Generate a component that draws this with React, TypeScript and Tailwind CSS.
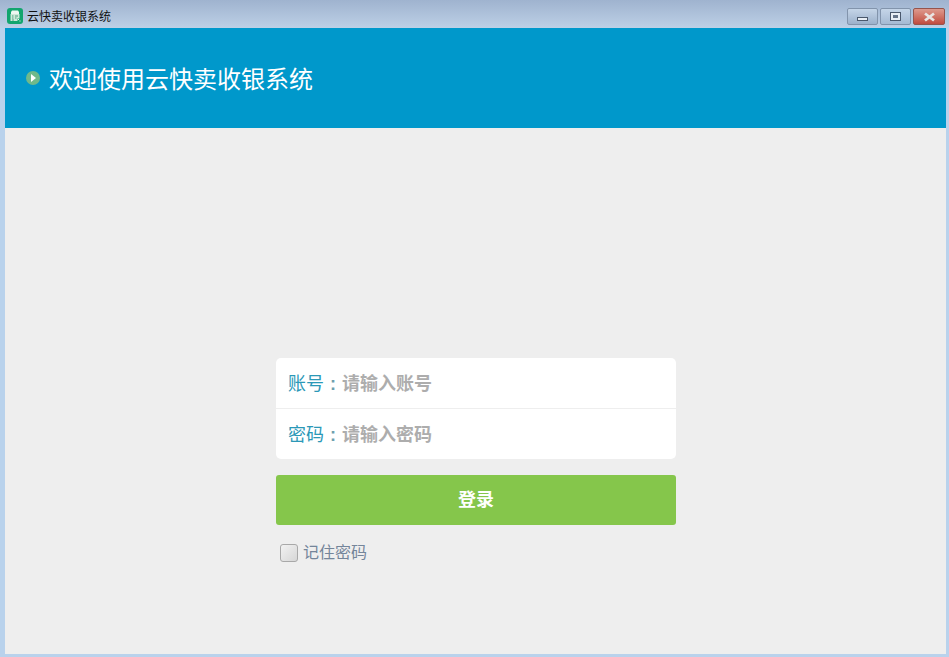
const cjk = "font-['Liberation_Sans','Noto_Sans_CJK_SC',sans-serif]";

function AppIcon() {
  return (
    <svg width="16" height="16" viewBox="0 0 16 16" className="shrink-0">
      <rect x="0" y="0" width="16" height="16" rx="3" fill="#12a56e" />
      <path d="M4 4 L5 2.5 H11 L12 4 V6 H4 Z" fill="#eef7f1" />
      <rect x="3.5" y="6" width="9" height="7" fill="#cfe8da" />
      <path d="M5 8 H6.5 M5 10 H6.5 M8 8 H11 M8 10 H9.5 M5 12 H7" stroke="#4aa37f" strokeWidth="1" />
      <rect x="10.5" y="10.5" width="3.5" height="3.5" fill="#12a56e" />
      <rect x="11" y="11" width="1" height="1" fill="#eef7f1" />
      <rect x="12.5" y="12.5" width="1" height="1" fill="#eef7f1" />
    </svg>
  );
}

function WindowButtons() {
  return (
    <div className="flex items-start gap-[2px] pt-[8px] pr-[4px]">
      <div className="flex h-[17px] w-[31px] items-end justify-center rounded-[2px] border border-[#8294ac] bg-gradient-to-b from-[#c5d5e8] to-[#9cb1cb] pb-[3px]">
        <div className="h-[4px] w-[11px] border border-[#4a586c] bg-[#e8eef5]" />
      </div>
      <div className="flex h-[17px] w-[31px] items-center justify-center rounded-[2px] border border-[#8294ac] bg-gradient-to-b from-[#c5d5e8] to-[#a5bad3]">
        <div className="flex h-[9px] w-[11px] items-center justify-center border border-[#4a586c] bg-[#e8eef5]">
          <div className="h-[3px] w-[5px] bg-[#66758a]" />
        </div>
      </div>
      <div className="flex h-[17px] w-[32px] items-center justify-center rounded-[2px] border border-[#96544c] bg-gradient-to-b from-[#dd9a8e] to-[#c04a3e]">
        <svg width="15" height="10" viewBox="0 0 15 10">
          <path d="M3 1.5 L12 8.5 M12 1.5 L3 8.5" stroke="#e9e4e2" strokeWidth="2.8" />
        </svg>
      </div>
    </div>
  );
}

function Field({ label, placeholder }: { label: string; placeholder: string }) {
  return (
    <div className="flex h-[50px] items-center pl-[12px] pt-[2px]">
      <span className="text-[18px] leading-[26px] text-[#2b98b7]">{label}</span>
      <span className="w-[18px] text-center text-[18px] font-bold leading-[26px] text-[#6f9fae]">:</span>
      <span className="text-[18px] font-bold leading-[26px] text-[#adadad]">{placeholder}</span>
    </div>
  );
}

export default function App() {
  return (
    <div className={`flex h-[657px] w-[949px] flex-col overflow-hidden bg-[#b9d2ec] ${cjk}`}>
      {/* Title bar */}
      <div className="flex h-[28px] shrink-0 justify-between bg-gradient-to-b from-[#9fb3cf] to-[#bdd0e6]">
        <div className="flex items-center gap-[4px] pl-[7px] pt-[4px]">
          <AppIcon />
          <span className="mt-[2px] text-[12px] leading-[16px] text-[#111111]">云快卖收银系统</span>
        </div>
        <WindowButtons />
      </div>

      {/* Window body */}
      <div className="mb-[3px] ml-[5px] mr-[3px] flex flex-1 flex-col bg-[#eeeeee]">
        <div className="flex h-[100px] shrink-0 items-center gap-[9px] bg-[#0098cb] pl-[21px]">
          <div className="flex h-[14px] w-[14px] items-center justify-center rounded-full bg-[#6fb98a]">
            <div className="ml-[1px] h-0 w-0 border-y-[4px] border-l-[5px] border-y-transparent border-l-white" />
          </div>
          <h1 className="mt-[4px] text-[24px] font-normal leading-[32px] text-white">欢迎使用云快卖收银系统</h1>
        </div>

        <div className="ml-[271px] flex w-[400px] flex-col pt-[230px]">
          <div className="flex flex-col rounded-[5px] bg-white">
            <Field label="账号" placeholder="请输入账号" />
            <div className="h-px bg-[#eeeeee]" />
            <Field label="密码" placeholder="请输入密码" />
          </div>
          <button className="mt-[16px] h-[50px] rounded-[3px] bg-[#85c64b] text-[18px] font-bold text-white">
            登录
          </button>
          <label className="mt-[19px] flex items-center gap-[5px] pl-[4px]">
            <span className="h-[18px] w-[18px] rounded-[3px] border border-[#a8a8a8] bg-gradient-to-br from-[#f2f2f2] to-[#d6d6d6]" />
            <span className="text-[16px] leading-[18px] text-[#74859a]">记住密码</span>
          </label>
        </div>
      </div>
    </div>
  );
}
